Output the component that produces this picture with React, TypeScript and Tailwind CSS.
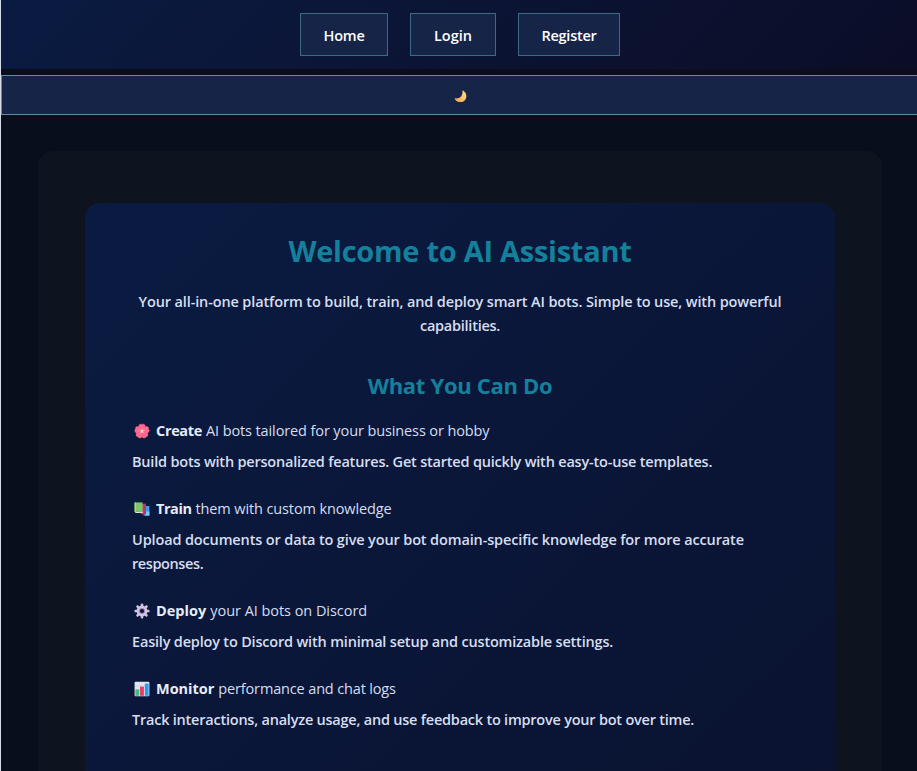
import React from "react";

function Blossom() {
  return (
    <svg viewBox="0 0 16 16" className="h-4 w-4">
      {[0, 72, 144, 216, 288].map((a) => (
        <path
          key={a}
          transform={`rotate(${a} 8 8.2)`}
          d="M8 8.6C4.8 6.8 4 3.4 5.2 1.8 6.2.6 7.4.7 8 1.4 8.6.7 9.8.6 10.8 1.8 12 3.4 11.2 6.8 8 8.6Z"
          fill="#fb6a8e"
          stroke="#f0557c"
          strokeWidth=".3"
        />
      ))}
      {[0, 72, 144, 216, 288].map((a) => (
        <path key={a} transform={`rotate(${a} 8 8.2)`} d="M8 8.2V6" stroke="#ffc2cf" strokeWidth=".9" strokeLinecap="round" />
      ))}
      <circle cx="8" cy="8.2" r="1.1" fill="#ffd9c4" />
    </svg>
  );
}

function Books() {
  return (
    <svg viewBox="0 0 16 16" className="h-4 w-4">
      <path d="M9.5 5H15.4V14.6H9.5Z" fill="#3d9be9" />
      <path d="M11 10.5H15.4V14.6H11Z" fill="#79c9f5" />
      <path d="M7 2.8H12V13.2H7Z" fill="#d5355f" />
      <path d="M9.8 2.8H12V13.2H9.8Z" fill="#a83c6c" />
      <path d="M.6 1.4H8.6V10.8H.6Z" fill="#7cc56a" />
      <path d="M.6 1.4H2V10.8H.6Z" fill="#a9d96d" />
      <path d="M.8 10.8H8.6V11.9H1.6Z" fill="#dfe8cf" />
    </svg>
  );
}

function Gear() {
  return (
    <svg viewBox="0 0 16 16" className="h-4 w-4">
      {[0, 45, 90, 135].map((a) => (
        <rect key={a} x="6.7" y=".5" width="2.6" height="15" rx=".9" fill="#cfc0e0" transform={`rotate(${a} 8 8)`} />
      ))}
      <circle cx="8" cy="8" r="4.2" fill="none" stroke="#d3c5e3" strokeWidth="2.5" />
      <circle cx="8" cy="8" r="3" fill="#9c87b5" />
      <circle cx="8" cy="8" r="2.1" fill="#0b1737" />
    </svg>
  );
}

function BarChart() {
  return (
    <svg viewBox="0 0 16 16" className="h-4 w-4">
      <rect x=".6" y=".8" width="14.8" height="14.4" rx="1" fill="#dfe6ee" />
      <path d="M1 5h14M1 9h14" stroke="#bfcbd8" strokeWidth=".5" />
      <rect x="1.4" y="8.4" width="3.8" height="6.4" fill="#41bd7c" />
      <rect x="6" y="5.6" width="3.9" height="9.2" fill="#e43f6c" />
      <rect x="10.8" y="2.6" width="3.8" height="12.2" fill="#2f9be8" />
    </svg>
  );
}

function Moon() {
  return (
    <svg viewBox="0 0 13 13" className="h-[13px] w-[13px]">
      <defs>
        <linearGradient id="moon" x1="1" y1="0" x2="0" y2="1">
          <stop offset="0" stopColor="#ffe58a" />
          <stop offset="1" stopColor="#f3a04c" />
        </linearGradient>
      </defs>
      <path d="M9 .6C12.3 2.6 13.2 6.2 11.6 9.2 9.6 12.8 3.4 13.4.8 8.9.7 8.5 1 8.2 1.4 8.3 5.6 9 9 5.6 8.5 1 8.4.6 8.7.4 9 .6Z" fill="url(#moon)" />
    </svg>
  );
}

const navItems = [
  { label: "Home", box: "w-[88px]", text: "tracking-[-0.22px]" },
  { label: "Login", box: "w-[86px]", text: "tracking-normal" },
  { label: "Register", box: "w-[102px]", text: "tracking-[-0.25px]" },
];

const features = [
  {
    Icon: Blossom,
    verb: "Create",
    verbClass: "tracking-[-0.34px]",
    rest: "AI bots tailored for your business or hobby",
    restClass: "tracking-[-0.11px]",
    lines: [{ text: "Build bots with personalized features. Get started quickly with easy-to-use templates.", cls: "tracking-[-0.2px]" }],
  },
  {
    Icon: Books,
    verb: "Train",
    verbClass: "tracking-[-0.44px]",
    rest: "them with custom knowledge",
    restClass: "tracking-[-0.116px]",
    lines: [
      { text: "Upload documents or data to give your bot domain-specific knowledge for more accurate", cls: "tracking-[-0.138px]" },
      { text: "responses.", cls: "tracking-[-0.4px]" },
    ],
  },
  {
    Icon: Gear,
    verb: "Deploy",
    verbClass: "tracking-[0.03px]",
    rest: "your AI bots on Discord",
    restClass: "tracking-[-0.05px]",
    lines: [{ text: "Easily deploy to Discord with minimal setup and customizable settings.", cls: "tracking-[-0.188px]" }],
  },
  {
    Icon: BarChart,
    verb: "Monitor",
    verbClass: "tracking-[-0.02px]",
    rest: "performance and chat logs",
    restClass: "tracking-[-0.15px]",
    lines: [{ text: "Track interactions, analyze usage, and use feedback to improve your bot over time.", cls: "tracking-[-0.225px]" }],
  },
];

export default function App() {
  return (
    <div className="h-[771px] overflow-hidden border-l border-[#d5dce6] bg-[#080e1c] font-['Open_Sans','Noto_Sans',sans-serif] text-[14.5px] leading-6 text-[#d6def0]">
      <header className="flex h-[69px] justify-center gap-[22px] bg-linear-135 from-[#0a1b42] to-[#0b0d27] pt-[13px] pl-[2px]">
        {navItems.map((n) => (
          <a key={n.label} className={`flex h-[43px] items-center justify-center border border-[#3d6a83] bg-[#162447] pt-0.5 font-semibold text-white ${n.box} ${n.text}`}>
            {n.label}
          </a>
        ))}
      </header>

      <button className="mt-[6px] flex h-10 w-full items-center justify-center border-y border-l border-[#5c8fa3] bg-[#162447] pt-0.5 pl-0.5">
        <Moon />
      </button>

      <main className="mt-9 mr-[35px] ml-[37px] h-[800px] rounded-[15px] bg-[#0e141f] px-[47px] pt-[52px]">
        <section className="h-[980px] rounded-[15px] bg-linear-135 from-[#0a1b42] to-[#0a102b] px-[47px] pt-7">
          <h1 className="text-center text-[29px] leading-10 font-bold tracking-[-0.26px] text-[#15809b]">Welcome to AI Assistant</h1>
          <p className="mt-[19px] text-center font-semibold whitespace-nowrap">
            <span className="block tracking-[-0.131px]">
              Your all-in-one platform to build, train, and deploy smart AI bots. Simple to use, with powerful
            </span>
            <span className="block tracking-[-0.25px]">capabilities.</span>
          </p>
          <h2 className="mt-[31px] text-center text-[22px] leading-8 font-bold tracking-[-0.313px] text-[#15809b]">What You Can Do</h2>
          <ul className="mt-[18px] flex flex-col gap-[23px]">
            {features.map(({ Icon, verb, verbClass, rest, restClass, lines }) => (
              <li key={verb}>
                <div className="flex items-center whitespace-nowrap">
                  <span className="mr-1.5 ml-0.5">
                    <Icon />
                  </span>
                  <strong className={`mr-1 font-bold text-[#e6ecf8] ${verbClass}`}>{verb}</strong>
                  <span className={restClass}>{rest}</span>
                </div>
                <p className="mt-[7px] font-semibold whitespace-nowrap">
                  {lines.map((l) => (
                    <span key={l.text} className={`block ${l.cls}`}>
                      {l.text}
                    </span>
                  ))}
                </p>
              </li>
            ))}
          </ul>
        </section>
      </main>
    </div>
  );
}
